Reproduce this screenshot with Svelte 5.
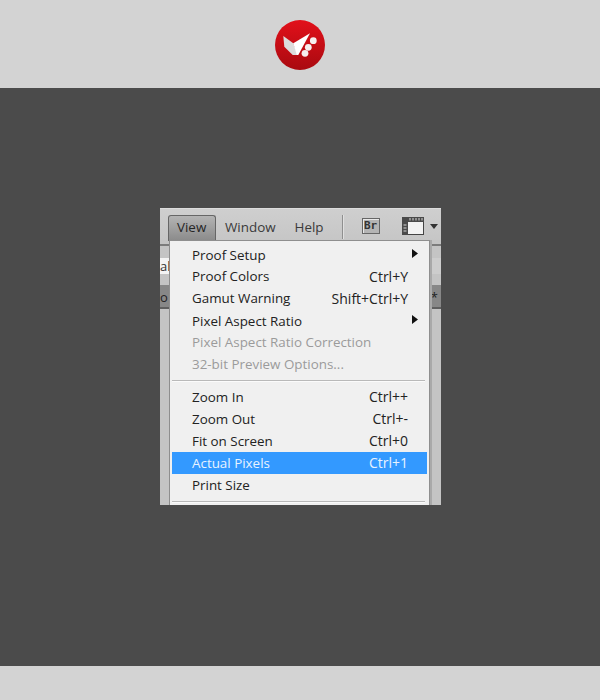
<script>
  const groups = [
    [
      { label: 'Proof Setup', arrow: true, h: 22 },
      { label: 'Proof Colors', key: 'Ctrl+Y', h: 21 },
      { label: 'Gamut Warning', key: 'Shift+Ctrl+Y', h: 23 },
      { label: 'Pixel Aspect Ratio', arrow: true, h: 22 },
      { label: 'Pixel Aspect Ratio Correction', off: true, h: 21 },
      { label: '32-bit Preview Options...', off: true, h: 22 }
    ],
    [
      { label: 'Zoom In', key: 'Ctrl++', h: 22 },
      { label: 'Zoom Out', key: 'Ctrl+-', h: 22 },
      { label: 'Fit on Screen', key: 'Ctrl+0', h: 22 },
      { label: 'Actual Pixels', key: 'Ctrl+1', on: true, h: 22 },
      { label: 'Print Size', h: 22 }
    ]
  ];
</script>

<div class="page">
  <header class="top">
    <svg class="logo" width="50" height="50" viewBox="0 0 50 50" role="img" aria-label="logo">
      <defs>
        <linearGradient id="red" x1="0" y1="0" x2="0" y2="1">
          <stop offset="0" stop-color="#e2101a" />
          <stop offset="1" stop-color="#a90a10" />
        </linearGradient>
      </defs>
      <circle cx="25" cy="25" r="25" fill="url(#red)" />
      <path d="M8.300 16 L18.300 23.300 L23 35 L17.700 35 L9.300 26.700 Z" fill="#dcdcdc" />
      <path d="M18.300 23.300 L35 13.300 L23.300 35 L21.800 35 Z" fill="#fff" />
      <circle cx="38.300" cy="20.700" r="3.400" fill="#f6eeee" />
      <circle cx="33.300" cy="27.300" r="3.400" fill="#f6eeee" />
      <circle cx="30" cy="33.300" r="3.400" fill="#f6eeee" />
    </svg>
  </header>

  <main class="stage">
    <div class="shot">
      <div class="bar">
        <span class="tab active">View</span>
        <span class="tab">Window</span>
        <span class="tab">Help</span>
        <span class="rule"></span>
        <span class="br">Br</span>
        <svg class="film" width="22" height="18" viewBox="0 0 22 18" aria-hidden="true">
          <rect x="0.500" y="0.500" width="21" height="17" fill="#f2f2f2" stroke="#444" />
          <path d="M0 0h22v5H0zM0 5h6v13H0z" fill="#4a4a4a" />
          <path d="M8 1v2.500M11 1v2.500M14 1v2.500M17 1v2.500M20 1v2.500M1.500 8h3M1.500 11h3M1.500 14h3" stroke="#d8d8d8" />
        </svg>
        <svg class="caret" width="8" height="5" viewBox="0 0 8 5" aria-hidden="true"><path d="M0 0h8L4 5z" fill="#333" /></svg>
      </div>

      <div class="under">
        <div class="line"></div>
        <div class="strip light"><span class="cut">al</span></div>
        <div class="strip mid"><span class="cut">o</span><span class="star">*</span></div>
      </div>

      <div class="menu">
        {#each groups as group, g}
          <div class="group">
            {#each group as item}
              <div class="row" class:off={item.off} class:on={item.on} style="height: {item.h}px">
                <span>{item.label}</span>
                {#if item.key}<span class="key">{item.key}</span>{/if}
                {#if item.arrow}
                  <svg class="arrow" width="6" height="9" viewBox="0 0 6 9" aria-hidden="true"><path d="M0 0l6 4.500-6 4.500z" fill="#111" /></svg>
                {/if}
              </div>
            {/each}
          </div>
          <div class="sep"></div>
        {/each}
      </div>
    </div>
  </main>

  <footer class="bottom"></footer>
</div>

<style>
  :global(body) {
    margin: 0;
  }
  .page {
    width: 600px;
    height: 700px;
    display: flex;
    flex-direction: column;
    font-family: "Open Sans", "Noto Sans", sans-serif;
  }
  .top {
    height: 88px;
    background: #d3d3d3;
    display: flex;
    justify-content: center;
    padding-top: 20px;
    box-sizing: border-box;
  }
  .logo {
    display: block;
  }
  .stage {
    flex: 1;
    background: #4b4b4b;
    padding: 120px 0 0 160px;
    box-sizing: border-box;
  }
  .bottom {
    height: 34px;
    background: #d3d3d3;
  }
  .shot {
    position: relative;
    width: 281px;
    height: 297px;
    overflow: hidden;
    background: #c4c4c4;
  }
  .bar {
    height: 32px;
    box-sizing: border-box;
    padding: 6px 0 0 8px;
    background: linear-gradient(#cfcfcf, #c6c6c6);
    border-top: 1px solid #dcdcdc;
    display: flex;
    align-items: flex-start;
    font-size: 13.4px;
    color: #3a3a3a;
  }
  .tab {
    height: 26px;
    line-height: 24px;
    box-sizing: border-box;
    padding: 0 8px;
    margin-right: 3px;
    white-space: nowrap;
  }
  .tab.active {
    width: 48px;
    padding: 0 0 0 8px;
    margin-right: 1px;
    border: 1px solid #666;
    border-bottom: none;
    border-radius: 3px 3px 0 0;
    background: linear-gradient(#b4b4b4, #8a8a8a);
    color: #262626;
    line-height: 23px;
  }
  .rule {
    width: 1px;
    height: 24px;
    margin-left: 7px;
    background: #8f8f8f;
    box-shadow: 1px 0 0 #e0e0e0;
  }
  .br {
    width: 18px;
    height: 16px;
    margin: 3px 0 0 19px;
    box-sizing: border-box;
    border: 1px solid #666;
    background: #b4b4b4;
    font: 700 11px/14px "DejaVu Sans Mono", monospace;
    text-align: center;
    color: #333;
    box-shadow: inset 1px 1px 0 #e8e8e8;
  }
  .film {
    margin: 2px 0 0 22px;
    flex: none;
  }
  .caret {
    margin: 9px 0 0 6px;
    flex: none;
  }
  .under {
    display: flex;
    flex-direction: column;
  }
  .line {
    height: 2px;
    margin-top: 4px;
    background: #7c7c7c;
  }
  .strip {
    font-size: 13px;
    color: #333;
    overflow: hidden;
    position: relative;
    margin-top: 11px;
  }
  .strip.light {
    height: 16px;
    line-height: 16px;
    background: linear-gradient(90deg, #f4f4f4 10px, #cdcdcd 10px);
    margin-top: 12px;
  }
  .strip.mid {
    height: 22px;
    line-height: 25px;
    background: #878787;
    border-bottom: 2px solid #5f5f5f;
    color: #222;
  }
  .cut {
    display: block;
    width: 10px;
    overflow: hidden;
    white-space: nowrap;
  }
  .star {
    position: absolute;
    right: 3px;
    top: 0;
  }
  .menu {
    position: absolute;
    left: 9px;
    top: 32px;
    width: 261px;
    height: 270px;
    box-sizing: border-box;
    padding: 3px 2px 0 2px;
    background: #f0f0f0;
    border: 1px solid #8e8e8e;
    box-shadow: 2px 0 0 #a9a9a9;
    font-size: 13.4px;
    color: #222;
  }
  .row {
    display: flex;
    align-items: center;
    justify-content: space-between;
    padding: 0 19px 1px 20px;
    box-sizing: border-box;
    position: relative;
    white-space: nowrap;
  }
  .key {
    font-size: 14px;
  }
  .row.off {
    color: #9b9b9b;
  }
  .row.on {
    background: #3399ff;
    color: #e8f3ff;
  }
  .arrow {
    position: absolute;
    right: 9px;
    top: 5px;
  }
  .sep {
    height: 1px;
    margin: 5px 2px 5px 0;
    background: #b9b9b9;
    box-shadow: 0 1px 0 #fbfbfb;
  }
</style>
